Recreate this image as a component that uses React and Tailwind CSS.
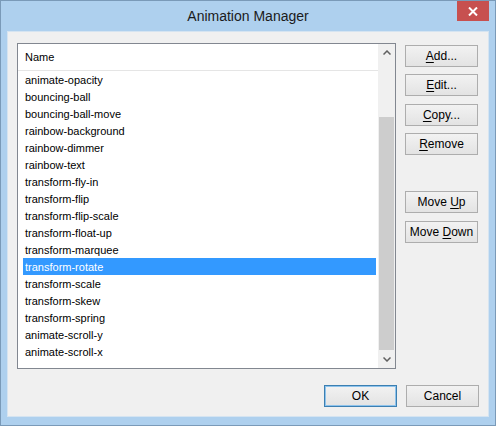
import React from "react";

const items = [
  "animate-opacity",
  "bouncing-ball",
  "bouncing-ball-move",
  "rainbow-background",
  "rainbow-dimmer",
  "rainbow-text",
  "transform-fly-in",
  "transform-flip",
  "transform-flip-scale",
  "transform-float-up",
  "transform-marquee",
  "transform-rotate",
  "transform-scale",
  "transform-skew",
  "transform-spring",
  "animate-scroll-y",
  "animate-scroll-x",
];

const Btn = ({ children, primary }) => (
  <button
    className={
      primary
        ? "w-[73px] h-[22px] border border-[#3c7fb1] bg-gradient-to-b from-[#f2f2f2] to-[#e3e3e3] text-[12px] text-black leading-none shadow-[inset_0_0_0_1px_#8ec3ec]"
        : "w-[73px] h-[22px] border border-[#adadad] bg-gradient-to-b from-[#f2f2f2] to-[#e3e3e3] text-[12px] text-black leading-none"
    }
  >
    {children}
  </button>
);

const U = ({ children }) => <span className="underline underline-offset-2">{children}</span>;

export default function App() {
  return (
    <div
      className="w-[496px] h-[426px] border border-[#7a9ab8] bg-[#aed0ee] flex flex-col"
      style={{ fontFamily: '"Liberation Sans", Arial, sans-serif' }}
    >
      <div className="h-[30px] relative flex items-center justify-center">
        <span className="text-[14px] text-[#1b1b1b]">Animation Manager</span>
        <div className="absolute right-[6px] top-0 w-[32px] h-[20px] bg-[#c7504f] flex items-center justify-center">
          <svg width="10" height="9" viewBox="0 0 10 9">
            <path d="M1 0.5 L9 8.5 M9 0.5 L1 8.5" stroke="white" strokeWidth="2" />
          </svg>
        </div>
      </div>

      <div className="mx-[6px] mb-[8px] h-[386px] bg-[#f0f0f0] border border-[#d5e4f1] flex flex-col px-[9px] pt-[11px]">
        <div className="flex gap-[9px]">
          <div className="w-[379px] h-[326px] border border-[#828790] bg-white flex">
            <div className="flex-1 flex flex-col">
              <div className="h-[27px] border-b border-[#e5e5e5] flex items-center pl-[7px] text-[11px] text-black">
                Name
              </div>
              <div className="flex flex-col pl-[5px] pr-[2px]">
                {items.map((it) => (
                  <div
                    key={it}
                    className={
                      it === "transform-rotate"
                        ? "h-[17px] flex items-center pl-[2px] pt-[1px] bg-[#3399ff] text-white text-[11px]"
                        : "h-[17px] flex items-center pl-[2px] pt-[1px] text-black text-[11px]"
                    }
                  >
                    {it}
                  </div>
                ))}
              </div>
            </div>
            <div className="w-[17px] bg-[#f0f0f0] flex flex-col">
              <div className="h-[17px] flex items-center justify-center">
                <svg width="8" height="5" viewBox="0 0 8 5">
                  <path d="M0.5 4.5 L4 1 L7.5 4.5" stroke="#606060" strokeWidth="1.5" fill="none" />
                </svg>
              </div>
              <div className="h-[56px]" />
              <div className="h-[233px] mx-[1px] bg-[#cdcdcd]" />
              <div className="flex-1 flex items-center justify-center">
                <svg width="8" height="5" viewBox="0 0 8 5">
                  <path d="M0.5 0.5 L4 4 L7.5 0.5" stroke="#606060" strokeWidth="1.5" fill="none" />
                </svg>
              </div>
            </div>
          </div>

          <div className="flex flex-col pt-[2px]">
            <Btn>
              <U>A</U>dd...
            </Btn>
            <div className="h-[7px]" />
            <Btn>
              <U>E</U>dit...
            </Btn>
            <div className="h-[8px]" />
            <Btn>
              <U>C</U>opy...
            </Btn>
            <div className="h-[7px]" />
            <Btn>
              <U>R</U>emove
            </Btn>
            <div className="h-[36px]" />
            <Btn>
              Move <U>U</U>p
            </Btn>
            <div className="h-[8px]" />
            <Btn>
              Move <U>D</U>own
            </Btn>
          </div>
        </div>

        <div className="flex justify-end gap-[9px] mt-[16px]">
          <Btn primary>OK</Btn>
          <Btn>Cancel</Btn>
        </div>
      </div>
    </div>
  );
}
